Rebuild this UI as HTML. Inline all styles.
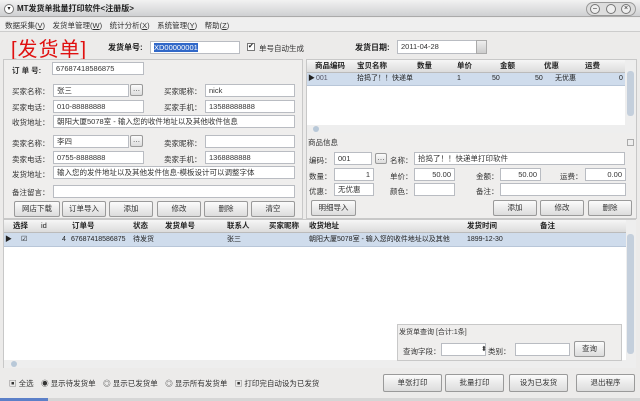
<!DOCTYPE html>
<html><head><meta charset="utf-8"><style>
*{box-sizing:border-box;margin:0;padding:0}
body{width:640px;height:401px;overflow:hidden;background:#ecebea;font-family:"Liberation Sans","Noto Sans CJK SC",sans-serif;font-size:8px;color:#222;position:relative}
.a{position:absolute;white-space:nowrap}
.in{position:absolute;background:#fff;border:1px solid #b9bcc2;height:13px;font-size:7.5px;line-height:11px;padding-left:3px;color:#333}
.btn{position:absolute;border:1px solid #9a9a9a;border-radius:2px;background:linear-gradient(#fbfbfb,#dcdcdc);height:16px;font-size:7.5px;line-height:14px;text-align:center;color:#333}
.sb{position:absolute;border:1px solid #9aa;background:linear-gradient(#f4f4f4,#d0d4d8);width:12px;height:11px;border-radius:2px;font-size:6px;text-align:center;line-height:8px}
.l{position:absolute;font-size:7.5px;white-space:nowrap;color:#333}
.hd{position:absolute;background:linear-gradient(#f6f6f6,#dcdcdc);border-bottom:1px solid #bbb;font-weight:bold;font-size:7.5px;line-height:12px}
.hd span,.row span{position:absolute;white-space:nowrap}
.row{position:absolute;background:#cfdcec;font-size:7px;line-height:12px;border-bottom:1px solid #b8c6d8}
</style></head><body>
<!-- title -->
<div class="a" style="left:0;top:0;width:640px;height:17px;background:linear-gradient(#f2f2f2,#cfd0d2);border-bottom:1px solid #aaa"></div>
<div class="a" style="left:4px;top:4px;width:10px;height:10px;border-radius:50%;border:1px solid #777;background:#fff;font-size:6px;line-height:8px;text-align:center">▾</div>
<div class="a" style="left:17px;top:3px;font-size:8px;font-weight:bold;color:#222">MT发货单批量打印软件&lt;注册版&gt;</div>
<div class="a" style="left:586px;top:2px;width:50px;height:14px;border:1px solid #999;border-radius:7px;background:#ddd"></div>
<div class="a" style="left:590px;top:4px;width:10px;height:10px;border-radius:50%;border:1px solid #777;background:#eee;font-size:7px;line-height:8px;text-align:center">–</div>
<div class="a" style="left:606px;top:4px;width:10px;height:10px;border-radius:50%;border:1px solid #777;background:#eee"></div>
<div class="a" style="left:621px;top:4px;width:10px;height:10px;border-radius:50%;border:1px solid #777;background:#eee;font-size:7px;line-height:8px;text-align:center">×</div>
<!-- menu -->
<div class="a" style="left:0;top:18px;width:640px;height:14px;background:#efefef;border-bottom:1px solid #ccc"></div>
<div class="l" style="left:5px;top:20px">数据采集(<u>V</u>)　发货单管理(<u>W</u>)　统计分析(<u>X</u>)　系统管理(<u>Y</u>)　帮助(<u>Z</u>)</div>
<!-- header -->
<div class="a" style="left:11px;top:33px;font-size:20px;color:#e01010;letter-spacing:1px">[发货单]</div>
<div class="a" style="left:108px;top:42px;font-size:8px;font-weight:bold">发货单号:</div>
<div class="in" style="left:150px;top:41px;width:90px"><span style="background:#3168c8;color:#fff">XD00000001</span></div>
<div class="a" style="left:247px;top:43px;width:8px;height:8px;border:1px solid #777;background:#fff;font-size:7px;line-height:6px">✔</div>
<div class="l" style="left:259px;top:43px">单号自动生成</div>
<div class="a" style="left:355px;top:42px;font-size:8px;font-weight:bold">发货日期:</div>
<div class="in" style="left:397px;top:40px;width:80px;height:14px">2011-04-28</div>
<div class="a" style="left:476px;top:40px;width:11px;height:14px;background:linear-gradient(#eee,#ccc);border:1px solid #aaa"></div>
<!-- left panel -->
<div class="a" style="left:3px;top:59px;width:300px;height:160px;border:1px solid #c8c8c8;background:#efeeed"></div>
<div class="l" style="left:12px;top:65px;font-weight:bold">订 单 号:</div>
<div class="in" style="left:52px;top:62px;width:92px">67687418586875</div>
<div class="l" style="left:12px;top:86px">买家名称：</div><div class="in" style="left:53px;top:84px;width:76px">张三</div><div class="btn" style="left:130px;top:84px;width:13px;height:12px;line-height:8px">…</div>
<div class="l" style="left:164px;top:86px">买家昵称：</div><div class="in" style="left:205px;top:84px;width:90px">nick</div>
<div class="l" style="left:12px;top:102px">买家电话：</div><div class="in" style="left:53px;top:100px;width:91px">010-88888888</div>
<div class="l" style="left:164px;top:102px">买家手机：</div><div class="in" style="left:205px;top:100px;width:90px">13588888888</div>
<div class="l" style="left:12px;top:117px">收货地址：</div><div class="in" style="left:53px;top:115px;width:242px">朝阳大厦5078室 - 输入您的收件地址以及其他收件信息</div>
<div class="l" style="left:12px;top:138px">卖家名称：</div><div class="in" style="left:53px;top:135px;width:76px">李四</div><div class="btn" style="left:130px;top:135px;width:13px;height:12px;line-height:8px">…</div>
<div class="l" style="left:164px;top:138px">卖家昵称：</div><div class="in" style="left:205px;top:135px;width:90px"></div>
<div class="l" style="left:12px;top:154px">卖家电话：</div><div class="in" style="left:53px;top:151px;width:91px">0755-8888888</div>
<div class="l" style="left:164px;top:154px">卖家手机：</div><div class="in" style="left:205px;top:151px;width:90px">1368888888</div>
<div class="l" style="left:12px;top:169px">发货地址：</div><div class="in" style="left:53px;top:166px;width:242px">输入您的发件地址以及其他发件信息-模板设计可以调整字体</div>
<div class="l" style="left:12px;top:187px">备注留言：</div><div class="in" style="left:53px;top:185px;width:242px"></div>
<div class="btn" style="left:14px;top:201px;width:46px">网店下载</div>
<div class="btn" style="left:62px;top:201px;width:44px">订单导入</div>
<div class="btn" style="left:109px;top:201px;width:44px">添加</div>
<div class="btn" style="left:157px;top:201px;width:44px">修改</div>
<div class="btn" style="left:204px;top:201px;width:44px">删除</div>
<div class="btn" style="left:251px;top:201px;width:44px">清空</div>
<!-- right grid -->
<div class="a" style="left:306px;top:59px;width:331px;height:160px;border:1px solid #c8c8c8;background:#efeeed"></div>
<div class="a" style="left:307px;top:60px;width:318px;height:65px;background:#fff"></div>
<div class="hd" style="left:307px;top:60px;width:318px;height:13px"><span style="left:8px">商品编码</span><span style="left:50px">宝贝名称</span><span style="left:110px">数量</span><span style="left:150px">单价</span><span style="left:193px">金额</span><span style="left:237px">优惠</span><span style="left:278px">运费</span></div>
<div class="row" style="left:307px;top:73px;width:318px;height:13px"><span style="left:1px">▶</span><span style="left:9px;color:#556">001</span><span style="left:50px">拾捣了！！快递单</span><span style="left:150px">1</span><span style="left:185px">50</span><span style="left:228px">50</span><span style="left:248px">无优惠</span><span style="left:312px">0</span></div>
<div class="a" style="left:625px;top:60px;width:11px;height:65px;background:#eee"></div>
<div class="a" style="left:627px;top:71px;width:7px;height:45px;background:#c4cfdc;border-radius:3px"></div>
<div class="a" style="left:307px;top:125px;width:329px;height:8px;background:#eee"></div>
<div class="a" style="left:313px;top:126px;width:6px;height:6px;border-radius:50%;background:#b8c8d8"></div>
<div class="l" style="left:308px;top:137px">商品信息</div>
<div class="a" style="left:627px;top:139px;width:7px;height:7px;border:1px solid #aaa;background:#eee"></div>
<div class="l" style="left:309px;top:155px">编码：</div><div class="in" style="left:334px;top:152px;width:38px">001</div><div class="btn" style="left:375px;top:153px;width:12px;height:11px;line-height:7px">…</div>
<div class="l" style="left:390px;top:155px">名称：</div><div class="in" style="left:414px;top:152px;width:211px">拾捣了！！快递单打印软件</div>
<div class="l" style="left:309px;top:171px">数量：</div><div class="in" style="left:334px;top:168px;width:40px;text-align:right;padding-right:3px">1</div>
<div class="l" style="left:390px;top:171px">单价：</div><div class="in" style="left:414px;top:168px;width:41px;text-align:right;padding-right:3px">50.00</div>
<div class="l" style="left:476px;top:171px">金额：</div><div class="in" style="left:500px;top:168px;width:41px;text-align:right;padding-right:3px">50.00</div>
<div class="l" style="left:560px;top:171px">运费：</div><div class="in" style="left:585px;top:168px;width:41px;text-align:right;padding-right:3px">0.00</div>
<div class="l" style="left:309px;top:186px">优惠：</div><div class="in" style="left:334px;top:183px;width:40px">无优惠</div>
<div class="l" style="left:390px;top:186px">颜色：</div><div class="in" style="left:414px;top:183px;width:41px"></div>
<div class="l" style="left:476px;top:186px">备注：</div><div class="in" style="left:500px;top:183px;width:126px"></div>
<div class="btn" style="left:311px;top:200px;width:45px">明细导入</div>
<div class="btn" style="left:493px;top:200px;width:44px">添加</div>
<div class="btn" style="left:540px;top:200px;width:44px">修改</div>
<div class="btn" style="left:588px;top:200px;width:44px">删除</div>
<!-- bottom grid -->
<div class="a" style="left:3px;top:219px;width:633px;height:149px;background:#fff;border:1px solid #c8c8c8"></div>
<div class="hd" style="left:4px;top:220px;width:622px;height:13px"><span style="left:9px">选择</span><span style="left:37px;font-weight:normal">id</span><span style="left:68px">订单号</span><span style="left:129px">状态</span><span style="left:161px">发货单号</span><span style="left:223px">联系人</span><span style="left:265px">买家昵称</span><span style="left:305px">收货地址</span><span style="left:463px">发货时间</span><span style="left:536px">备注</span></div>
<div class="row" style="left:4px;top:233px;width:622px;height:14px;line-height:13px"><span style="left:1px">▶</span><span style="left:17px">☑</span><span style="left:58px">4</span><span style="left:67px">67687418586875</span><span style="left:129px">待发货</span><span style="left:223px">张三</span><span style="left:305px">朝阳大厦5078室 - 输入您的收件地址以及其他</span><span style="left:463px">1899-12-30</span></div>
<div class="a" style="left:626px;top:220px;width:10px;height:140px;background:#eee"></div>
<div class="a" style="left:627px;top:234px;width:7px;height:120px;background:#c4cfdc;border-radius:3px"></div>
<div class="a" style="left:4px;top:360px;width:632px;height:8px;background:#eee"></div>
<div class="a" style="left:11px;top:361px;width:6px;height:6px;border-radius:50%;background:#b8c8d8"></div>
<!-- query panel -->
<div class="a" style="left:397px;top:324px;width:225px;height:37px;background:#efeeed;border:1px solid #c8c8c8"></div>
<div class="l" style="left:399px;top:327px;font-size:7px">发货单查询 [合计:1条]</div>
<div class="l" style="left:403px;top:346px">查询字段：</div><div class="in" style="left:441px;top:343px;width:45px"></div>
<div class="l" style="left:481px;top:345px;font-size:7px">⬍</div>
<div class="l" style="left:488px;top:346px">类别：</div><div class="in" style="left:515px;top:343px;width:55px"></div>
<div class="btn" style="left:574px;top:341px;width:31px">查询</div>
<!-- bottom bar -->
<div class="l" style="left:9px;top:378px">▣ 全选　◉ 显示待发货单　◎ 显示已发货单　◎ 显示所有发货单　▣ 打印完自动设为已发货</div>
<div class="btn" style="left:383px;top:374px;width:59px;height:18px;line-height:16px">单张打印</div>
<div class="btn" style="left:445px;top:374px;width:59px;height:18px;line-height:16px">批量打印</div>
<div class="btn" style="left:509px;top:374px;width:59px;height:18px;line-height:16px">设为已发货</div>
<div class="btn" style="left:576px;top:374px;width:59px;height:18px;line-height:16px">退出程序</div>
<div class="a" style="left:0;top:398px;width:640px;height:3px;background:#d6d6d6"></div>
<div class="a" style="left:0;top:398px;width:48px;height:3px;background:#5c80c8"></div>
</body></html>
